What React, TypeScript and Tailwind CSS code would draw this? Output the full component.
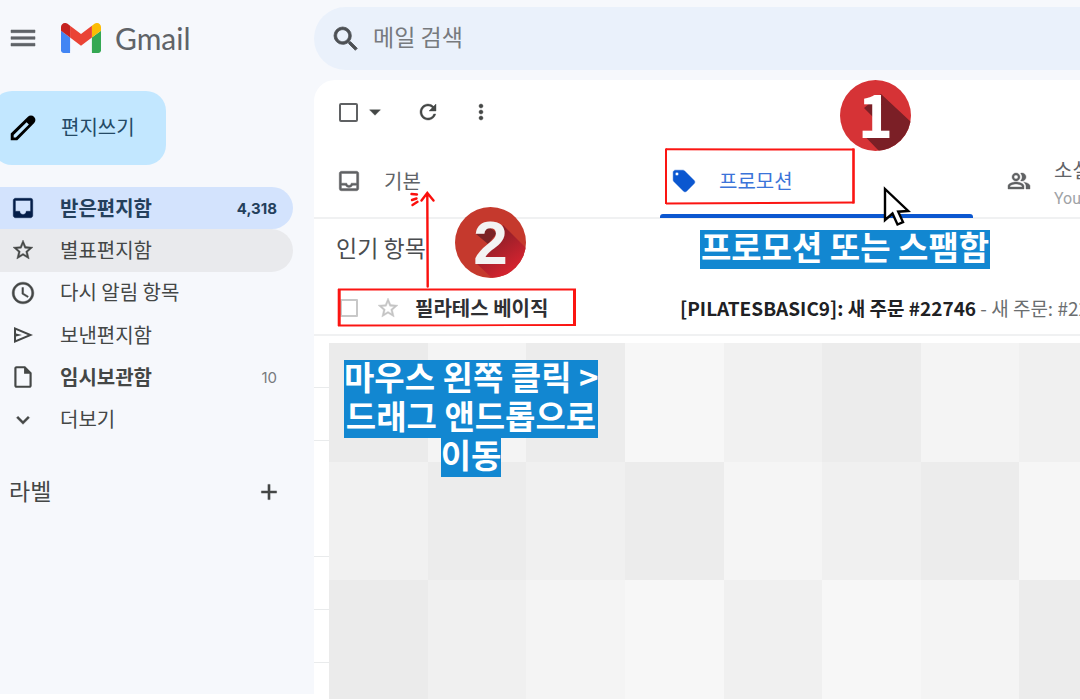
import type { ReactNode } from 'react';
import {
  MdAccessTime,
  MdAdd,
  MdArrowDropDown,
  MdInbox,
  MdKeyboardArrowDown,
  MdLocalOffer,
  MdMenu,
  MdMoreVert,
  MdOutlineInbox,
  MdOutlinePeopleAlt,
  MdRefresh,
  MdSearch,
  MdStarBorder,
} from 'react-icons/md';

function GmailLogo() {
  return (
    <svg viewBox="52 42 88 66" className="h-[30px] w-10" aria-hidden="true">
      <path fill="#4285f4" d="M58 108h14V74L52 59v43c0 3.32 2.69 6 6 6" />
      <path fill="#34a853" d="M120 108h14c3.32 0 6-2.69 6-6V59l-20 15" />
      <path fill="#fbbc04" d="M120 48v26l20-15v-8c0-7.42-8.47-11.65-14.4-7.2" />
      <path fill="#ea4335" d="M72 74V48l24 18 24-18v26L96 92" />
      <path fill="#c5221f" d="M52 51v8l20 15V48l-5.6-4.2c-5.94-4.45-14.4-.22-14.4 7.2" />
    </svg>
  );
}

function PencilIcon() {
  return (
    <svg viewBox="0 0 24 24" className="size-8" aria-hidden="true">
      <path
        fillRule="evenodd"
        d="M2.800 21.200v-5L15.700 3.600q.9-.9 2.300-.9 1.300 0 2.200.9l.3.300q.8.900.8 2.100 0 1.300-.9 2.200L7.700 21.200ZM5 19.200h1.600L16.400 9.400 14.700 7.700 5 17.300Z"
      />
    </svg>
  );
}

function SendIcon() {
  return (
    <svg viewBox="0 0 24 24" fill="currentColor" className="size-6" aria-hidden="true">
      <path fillRule="evenodd" d="M3 20V4l19 8-19 8Zm2-3 11.85-5L5 7v3.500l6 1.500-6 1.500V17Z" />
    </svg>
  );
}

function DraftIcon() {
  return (
    <svg viewBox="0 0 24 24" fill="currentColor" className="size-[26px]" aria-hidden="true">
      <path
        fillRule="evenodd"
        d="M6 22q-.8 0-1.400-.6T4 20V4q0-.8.6-1.400T6 2h8l6 6v12q0 .8-.6 1.400T18 22Zm7-13V4H6v16h12V9Z"
      />
    </svg>
  );
}

type Folder = {
  label: string;
  icon: ReactNode;
  count?: string;
  row?: string;
  text?: string;
  countText?: string;
};

const folders: Folder[] = [
  {
    label: '받은편지함',
    icon: <MdInbox className="size-[26px] text-[#041e49]" />,
    count: '4,318',
    row: 'bg-[#d3e3fd]',
    text: 'font-bold text-[#24405c]',
    countText: 'font-bold text-[#24405c]',
  },
  { label: '별표편지함', icon: <MdStarBorder className="size-6" />, row: 'bg-[#e9eaed]' },
  { label: '다시 알림 항목', icon: <MdAccessTime className="size-[26px]" /> },
  { label: '보낸편지함', icon: <SendIcon /> },
  {
    label: '임시보관함',
    icon: <DraftIcon />,
    count: '10',
    text: 'font-bold text-[#444746]',
    countText: 'text-[#777a7c]',
  },
  { label: '더보기', icon: <MdKeyboardArrowDown className="size-[26px]" /> },
];

function Sidebar() {
  return (
    <aside className="h-[694px] w-[314px] shrink-0 bg-[#f6f8fc]">
      <div className="flex h-[76px] items-center pl-[7px]">
        <button type="button" aria-label="메뉴" className="text-[#5f6368]">
          <MdMenu className="size-8 [&_path:not([fill=none])]:stroke-[0.4]" />
        </button>
        <a href="#" className="ml-[22px] flex items-center gap-[14px]">
          <GmailLogo />
          <span className="font-[Lato,sans-serif] text-[30px] leading-8 text-[#5f6368]">Gmail</span>
        </a>
      </div>
      <button
        type="button"
        className="mt-[15px] -ml-2 flex h-[74px] w-[174px] items-center gap-[22px] rounded-[20px] bg-[#c2e7ff] pl-[15px] text-xl text-[#244a66]"
      >
        <span className="text-black">
          <PencilIcon />
        </span>
        <span className="pb-0.5">편지쓰기</span>
      </button>
      <nav className="mt-[22px] grid h-[254px] auto-rows-fr pr-[21px] [&_path:not([fill=none])]:stroke-[0.4]">
        {folders.map((f) => (
          <a
            key={f.label}
            href="#"
            className={`flex items-center rounded-r-full pr-4 pl-[10px] text-[#444746] ${f.row ?? ''}`}
          >
            <span className="flex w-[26px] justify-center">{f.icon}</span>
            <span className={`ml-6 flex-1 pb-px text-xl leading-none ${f.text ?? ''}`}>{f.label}</span>
            <span className={`font-[Inter,sans-serif] text-[15px] leading-none ${f.countText ?? ''}`}>{f.count}</span>
          </a>
        ))}
      </nav>
      <div className="mt-[33px] flex items-center justify-between pr-8 pl-[9px] text-[#444746]">
        <h2 className="pb-1 text-[23px] leading-8">라벨</h2>
        <button type="button" aria-label="새 라벨 만들기">
          <MdAdd className="size-[26px] [&_path:not([fill=none])]:stroke-[0.4]" />
        </button>
      </div>
    </aside>
  );
}

function Toolbar() {
  return (
    <div className="flex h-16 items-center pl-[25px] text-[#444746] [&_path:not([fill=none])]:stroke-[0.4]">
      <input
        type="checkbox"
        aria-label="모두 선택"
        className="size-[19px] appearance-none rounded-[2px] border-2 border-[#5f6163]"
      />
      <button type="button" aria-label="선택 옵션" className="ml-1">
        <MdArrowDropDown className="size-[26px]" />
      </button>
      <button type="button" aria-label="새로고침" className="ml-[28px]">
        <MdRefresh className="size-6" />
      </button>
      <button type="button" aria-label="더보기" className="ml-[29px]">
        <MdMoreVert className="size-6" />
      </button>
    </div>
  );
}

function Tabs() {
  return (
    <div
      role="tablist"
      className="flex h-[75px] border-b-2 border-[#f0f1f2] text-xl text-[#5f6368] [&_path:not([fill=none])]:stroke-[0.4]"
    >
      <button type="button" role="tab" className="flex w-[335px] shrink-0 items-center gap-[22px] pt-px pl-[22px]">
        <MdOutlineInbox className="size-[26px] text-[#5f6163]" />
        기본
      </button>
      <button
        type="button"
        role="tab"
        aria-selected="true"
        className="relative flex w-[335px] shrink-0 items-center gap-[22px] pt-px pl-[22px] text-[#3b74d9]"
      >
        <MdLocalOffer className="size-[26px] text-[#0b57d0]" />
        프로모션
        <span className="absolute inset-x-[11px] -bottom-px h-1 rounded-t-[3px] bg-[#0b57d0]" />
      </button>
      <button
        type="button"
        role="tab"
        className="flex w-[335px] shrink-0 items-center gap-[23px] pt-px pl-[23px] text-left"
      >
        <MdOutlinePeopleAlt className="size-6 text-[#5f6163]" />
        <span className="flex flex-col gap-[3px] pt-1">
          <span className="leading-7">소셜</span>
          <span className="font-[Roboto,sans-serif] text-base leading-6 text-[#a0a3a6]">YouTube</span>
        </span>
      </button>
    </div>
  );
}

function MessageRow() {
  return (
    <div className="flex h-[54px] items-center border-b-2 border-[#f0f1f2] pl-[26px] text-xl whitespace-nowrap">
      <input
        type="checkbox"
        aria-label="필라테스 베이직 선택"
        className="size-[18px] shrink-0 appearance-none rounded-[1px] border-2 border-[#c8c8c8]"
      />
      <button type="button" aria-label="별표" className="ml-[18px] text-[#c4c4c4]">
        <MdStarBorder className="size-6 [&_path:not([fill=none])]:stroke-[0.4]" />
      </button>
      <span className="ml-[15px] w-[265px] shrink-0 font-bold text-[#2f3033]">필라테스 베이직</span>
      <a href="#" className="text-[19px] text-[#6b6e70]">
        <b className="text-[#202124]">[PILATESBASIC9]: 새 주문 #22746</b> - 새 주문: #22746
      </a>
    </div>
  );
}

const mosaic = [
  'bg-[#ebebeb]', 'bg-[#f4f4f4]', 'bg-[#ececec]', 'bg-[#f7f7f7]', 'bg-[#f1f1f1]', 'bg-[#ececec]', 'bg-[#f4f4f4]', 'bg-[#f0f0f0]',
  'bg-[#f1f1f1]', 'bg-[#ececec]', 'bg-[#f0f0f0]', 'bg-[#ececec]', 'bg-[#f5f5f5]', 'bg-[#f0f0f0]', 'bg-[#ececec]', 'bg-[#f6f6f6]',
  'bg-[#ebebeb]', 'bg-[#f0f0f0]', 'bg-[#f4f4f4]', 'bg-[#f7f7f7]', 'bg-[#f0f0f0]', 'bg-[#f7f7f7]', 'bg-[#f4f4f4]', 'bg-[#ececec]',
];

function HiddenMessages() {
  return (
    <div className="flex">
      <div className="w-[15px] shrink-0">
        <div className="h-[52px] border-b border-[#e9ebec]" />
        <div className="h-[53px] border-b border-[#e9ebec]" />
        <div className="h-[116px] border-b border-[#e9ebec]" />
        <div className="h-[53px] border-b border-[#e9ebec]" />
        <div className="h-[53px] border-b border-[#e9ebec]" />
      </div>
      <div className="mt-[7px] min-w-0 flex-1 overflow-hidden">
        <div className="grid h-[356px] w-[789px] grid-cols-8 grid-rows-3">
          {mosaic.map((tone, i) => (
            <div key={i} className={tone} />
          ))}
        </div>
      </div>
    </div>
  );
}

function StepOne() {
  return (
    <svg viewBox="0 0 71 71" className="absolute top-20 left-[840px] size-[71px]" role="img" aria-label="1단계">
      <clipPath id="disc-one">
        <circle cx="35.5" cy="35.5" r="35.5" />
      </clipPath>
      <g clipPath="url(#disc-one)">
        <rect width="71" height="71" fill="#d63336" />
        <path d="M41 14 71 42v29H39L26 57.500 33 50V37L24 28Z" fill="#7b1f26" />
      </g>
      <text
        x="35.500"
        y="57.500"
        textAnchor="middle"
        fill="#fff"
        fontSize="60"
        className="font-['Noto_Sans_CJK_KR',sans-serif] font-bold"
      >
        1
      </text>
    </svg>
  );
}

function StepTwo() {
  return (
    <svg viewBox="0 0 71 71" className="absolute top-[207px] left-[455px] size-[71px]" role="img" aria-label="2단계">
      <defs>
        <clipPath id="disc-two">
          <circle cx="35.5" cy="35.5" r="35.5" />
        </clipPath>
        <linearGradient id="shade-two" x1="0.2" y1="0.3" x2="0.6" y2="0.9">
          <stop offset="0" stopColor="#8d1f28" />
          <stop offset="1" stopColor="#d2232f" />
        </linearGradient>
      </defs>
      <g clipPath="url(#disc-two)">
        <rect width="71" height="71" fill="#c5392d" />
        <path d="M48 18 71 41v30H37L22 57 36 40Z" fill="url(#shade-two)" />
        <path d="M21 27 34 20l8 6-9 11Z" fill="#7b2326" />
      </g>
      <text
        x="35.500"
        y="57"
        textAnchor="middle"
        fill="#f3f3f3"
        fontSize="62"
        className="font-['Liberation_Sans',sans-serif] font-bold"
      >
        2
      </text>
    </svg>
  );
}

function Pointer() {
  return (
    <svg viewBox="0 0 30 44" className="absolute top-[184px] left-[882px] h-11 w-[30px]" aria-hidden="true">
      <path
        d="M3 5v31l7.500-6.500L15.500 40.500l5.500-2.400-4.800-10.400 10-.7Z"
        fill="#fff"
        stroke="#000"
        strokeWidth="2.400"
      />
    </svg>
  );
}

function Annotations() {
  const callout = 'bg-[#1287d1] pb-[6px] text-[33px] leading-[33px] font-bold text-white whitespace-nowrap text-center';
  return (
    <>
      <svg viewBox="0 0 192 58" className="absolute top-[147px] left-[664px] h-[58px] w-48" aria-hidden="true">
        <path d="M2 2.300 190 2.600M2 56.500 100 56 190 55.500" stroke="#fb1512" strokeWidth="2" fill="none" />
        <path d="M2 1.500V57" stroke="#fb1512" strokeWidth="2" />
        <path d="M189.500 1.500V56.500" stroke="#fb1512" strokeWidth="2.600" />
      </svg>
      <svg viewBox="0 0 240 40" className="absolute top-[287px] left-[337px] h-10 w-60" aria-hidden="true">
        <path d="M1 2.500H239M1 38.500 120 38.300 239 38" stroke="#fb1512" strokeWidth="1.800" fill="none" />
        <path d="M2.200 2V39M237.500 2V38.500" stroke="#fb1512" strokeWidth="3" />
      </svg>
      <svg viewBox="0 0 30 100" className="absolute top-[190px] left-[408px] h-[100px] w-[30px]" aria-hidden="true">
        <g stroke="#fb0f0c" strokeWidth="2.400" strokeLinecap="round" fill="none">
          <path d="M19.300 3.500 19.700 96.500M13.500 10.500 19.300 3 25.500 10.500" />
          <path d="M3.500 4 9 4.500M4 10 8.500 8.500M4.500 15 9.500 11.800" />
        </g>
      </svg>
      <p className={`absolute top-[230px] left-[700px] w-[290px] ${callout}`}>프로모션 또는 스팸함</p>
      <p className="absolute top-[360px] left-[344px] flex w-[254px] flex-col items-center">
        <span className={`self-stretch ${callout}`}>마우스 왼쪽 클릭 &gt;</span>
        <span className={`self-stretch ${callout}`}>드래그 앤드롭으로</span>
        <span className={callout}>이동</span>
      </p>
      <StepOne />
      <StepTwo />
      <Pointer />
    </>
  );
}

export default function App() {
  return (
    <div className="relative flex min-h-screen overflow-hidden bg-white font-['Noto_Sans_CJK_KR',sans-serif]">
      <Sidebar />
      <main className="min-w-0 flex-1">
        <div className="bg-[#f6f8fc] pt-[7px]">
          <label className="flex h-[63px] items-center gap-[11px] rounded-l-full bg-[#eaf1fb] pl-4 text-[#4d5054]">
            <MdSearch className="size-8 shrink-0 [&_path:not([fill=none])]:stroke-[0.6]" />
            <input
              type="search"
              placeholder="메일 검색"
              aria-label="메일 검색"
              className="min-w-0 flex-1 bg-transparent pb-1 text-[23px] outline-none placeholder:text-[#777a7e]"
            />
          </label>
          <div className="mt-[10px] h-16 rounded-tl-[21px] bg-white">
            <Toolbar />
          </div>
        </div>
        <Tabs />
        <h1 className="mt-[9px] h-[54px] pl-[22px] text-[23px] leading-[38px] text-[#4a4d50]">인기 항목</h1>
        <MessageRow />
        <HiddenMessages />
      </main>
      <Annotations />
    </div>
  );
}
